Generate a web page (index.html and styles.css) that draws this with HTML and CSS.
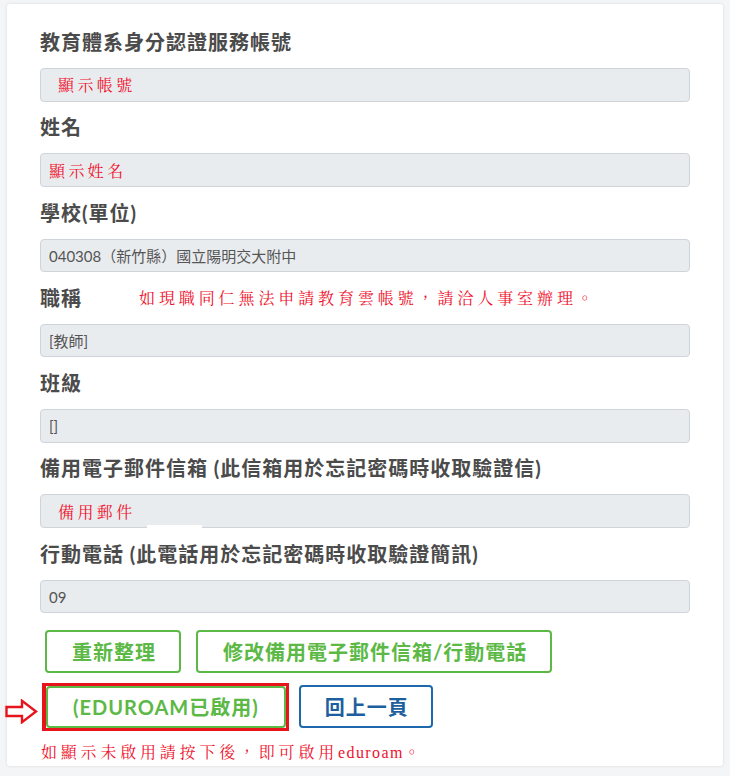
FILE: index.html
```html
<!DOCTYPE html>
<html lang="zh-Hant">
<head>
<meta charset="utf-8">
<title>教育體系身分認證服務帳號</title>
<link rel="stylesheet" href="styles.css">
</head>
<body>
<div class="page">
  <div class="card">
    <div class="group">
      <div class="label">教育體系身分認證服務帳號</div>
      <div class="field"><span class="ming indent">顯示帳號</span></div>
    </div>
    <div class="group">
      <div class="label">姓名</div>
      <div class="field"><span class="ming">顯示姓名</span></div>
    </div>
    <div class="group">
      <div class="label">學校(單位)</div>
      <div class="field">040308（新竹縣）國立陽明交大附中</div>
    </div>
    <div class="group">
      <div class="label">職稱<span class="ming note-inline">如現職同仁無法申請教育雲帳號，請洽人事室辦理。</span></div>
      <div class="field">[教師]</div>
    </div>
    <div class="group">
      <div class="label">班級</div>
      <div class="field">[]</div>
    </div>
    <div class="group">
      <div class="label">備用電子郵件信箱 (此信箱用於忘記密碼時收取驗證信)</div>
      <div class="field"><span class="ming indent">備用郵件</span><span class="gap-mark"></span></div>
    </div>
    <div class="group">
      <div class="label">行動電話 (此電話用於忘記密碼時收取驗證簡訊)</div>
      <div class="field">09</div>
    </div>
    <div class="btn-row first">
      <button class="btn btn-green">重新整理</button>
      <button class="btn btn-green">修改備用電子郵件信箱/行動電話</button>
    </div>
    <div class="btn-row second">
      <svg class="arrow" width="33" height="25" viewBox="0 0 33 25" aria-hidden="true">
        <path d="M1.5 8 H17 V1.8 L31 12.5 L17 23.2 V17 H1.5 Z" fill="none" stroke="#e8141c" stroke-width="2.4" stroke-linejoin="miter"/>
      </svg>
      <div class="highlight">
        <button class="btn btn-green">(EDUROAM已啟用)</button>
      </div>
      <button class="btn btn-blue">回上一頁</button>
    </div>
    <div class="ming bottom-note">如顯示未啟用請按下後，即可啟用<span class="latin">eduroam</span>。</div>
  </div>
</div>
</body>
</html>
```

FILE: styles.css
```css
* { box-sizing: border-box; }

html, body {
  margin: 0;
  padding: 0;
  background: #f4f5f7;
}

body {
  font-family: Lato, "Noto Sans CJK TC", sans-serif;
  color: #4a4a4a;
}

.page {
  padding: 4px 7px 10px 7px;
}

.card {
  background: #ffffff;
  border-radius: 3px;
  box-shadow: 0 0 3px rgba(0, 0, 0, 0.12);
  padding: 23px 33px 14px 33px;
  height: 762px;
}

.group {
  margin-bottom: 10.8px;
}

.label {
  font-size: 20px;
  height: 30px;
  line-height: 30px;
  font-weight: 700;
  letter-spacing: 1px;
  color: #4b4b4b;
  margin-bottom: 11px;
  white-space: nowrap;
  overflow: visible;
}

.field {
  position: relative;
  height: 33.5px;
  background: #e9ecef;
  border: 1px solid #cfd4da;
  border-radius: 4px;
  padding: 0 8px;
  display: flex;
  align-items: center;
  font-size: 15px;
  color: #555555;
  font-weight: 400;
}

.ming {
  font-family: "Liberation Serif", "Noto Serif CJK TC", "Noto Sans CJK TC", serif;
  color: #f0102c;
  font-weight: 400;
  font-size: 16px;
  letter-spacing: 3.4px;
}

.indent {
  margin-left: 9px;
}

.gap-mark {
  position: absolute;
  left: 106px;
  bottom: -1px;
  width: 55px;
  height: 3px;
  background: #ffffff;
}

.note-inline {
  display: inline-block;
  margin-left: 57px;
  font-size: 16px;
  line-height: 30px;
  height: 30px;
  letter-spacing: 3.9px;
  vertical-align: top;
  position: relative;
  top: 1px;
}

.btn-row {
  display: flex;
  align-items: center;
}

.btn-row.first {
  margin-top: 16.5px;
  padding-left: 5px;
  gap: 15px;
}

.btn-row.second {
  position: relative;
  margin-top: 10px;
  padding-left: 2px;
  gap: 10px;
}

.btn {
  height: 43px;
  background: #ffffff;
  border-radius: 4px;
  border: 2px solid #5cb946;
  font-family: Lato, "Noto Sans CJK TC", sans-serif;
  font-size: 20px;
  font-weight: 700;
  letter-spacing: 1px;
  padding: 0 23px 0 25px;
  cursor: pointer;
}

.btn-green {
  color: #5cb946;
}

.btn-blue {
  border-color: #1e68ad;
  color: #1d5f9e;
  height: 43px;
  padding: 0 22px 0 24px;
}

.highlight {
  border: 3px solid #e8141c;
  border-left-width: 4px;
  padding: 0;
  display: flex;
}

.highlight .btn {
  height: 42px;
  letter-spacing: 1px;
  padding: 0 25px;
}

.arrow {
  position: absolute;
  left: -35px;
  top: 16px;
}

.bottom-note {
  margin-top: 11px;
  font-size: 16px;
  letter-spacing: 3.8px;
  line-height: 22px;
  padding-left: 1px;
}

.bottom-note .latin {
  letter-spacing: 1.4px;
}
```
